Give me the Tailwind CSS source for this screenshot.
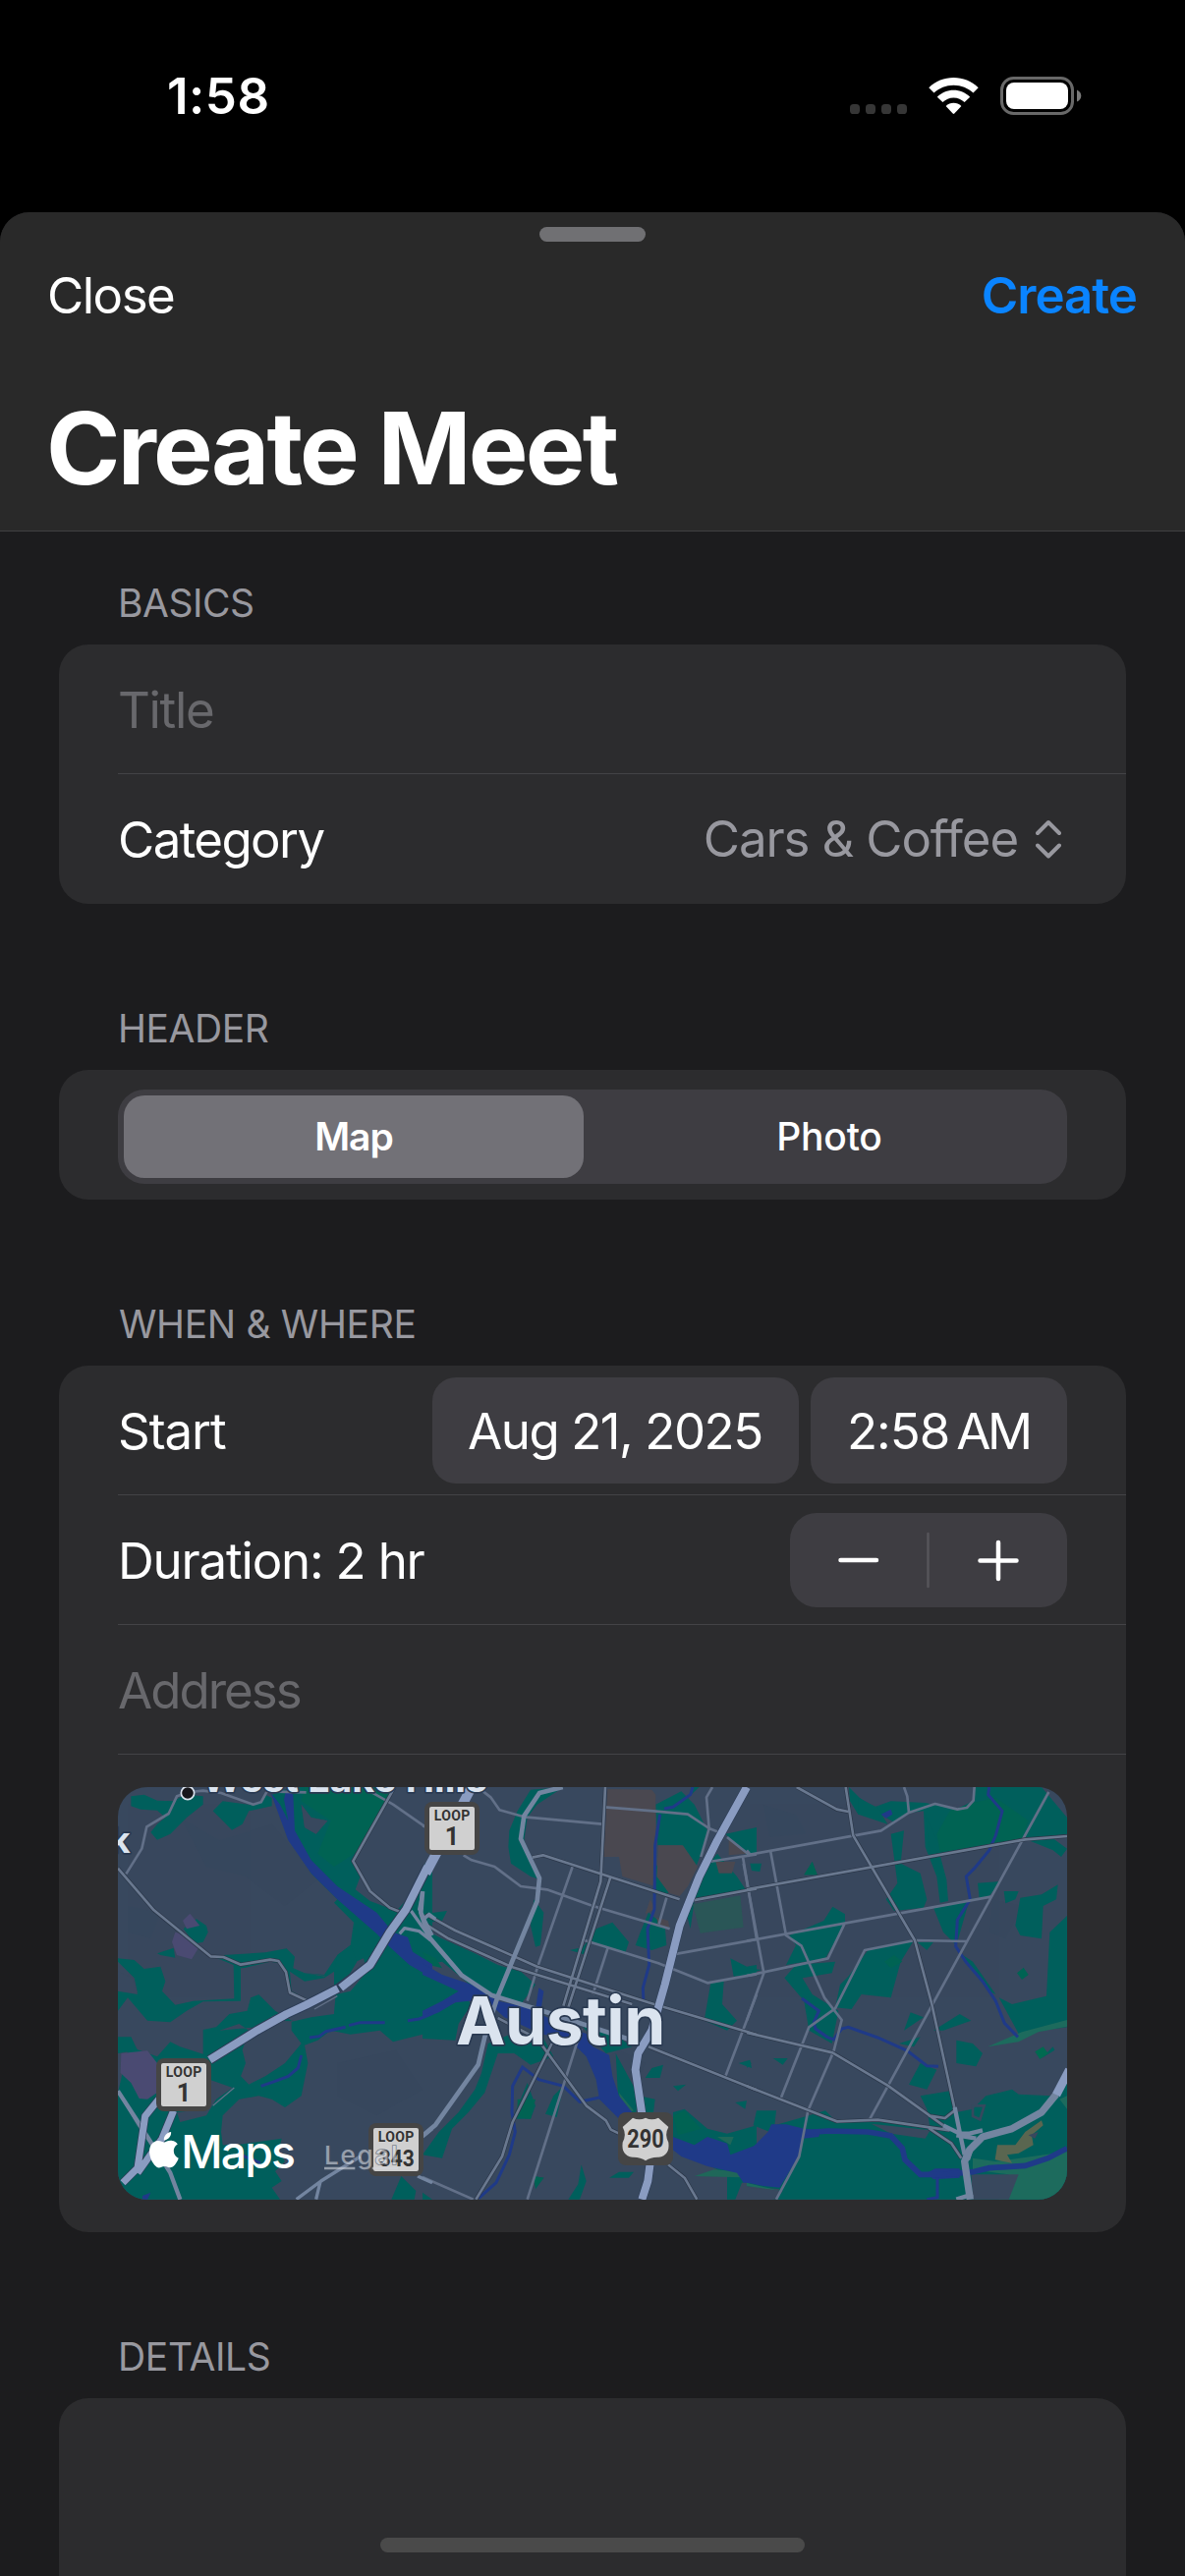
<!DOCTYPE html>
<html lang="en">
<head>
<meta charset="utf-8">
<title>Create Meet</title>
<script src="https://cdn.jsdelivr.net/npm/@tailwindcss/browser@4"></script>
</head>
<body class="bg-black">
<div class="relative flex h-[2622px] w-[1206px] flex-col overflow-hidden bg-black font-['Inter',sans-serif] text-[51px] leading-[60px] text-white">

  <!-- Status bar -->
  <div class="flex h-[216px] shrink-0 items-start justify-between pt-[68px] pr-[105px] pl-[170px]">
    <span class="font-semibold tracking-[0.5px]">1:58</span>
    <svg class="mt-[7px] h-[46px] w-[238px]" viewBox="863 75 238 46">
      <g fill="#363636">
        <rect x="865" y="106" width="10" height="10" rx="3.6"/><rect x="881" y="106" width="10" height="10" rx="3.6"/>
        <rect x="897" y="106" width="10" height="10" rx="3.6"/><rect x="913" y="106" width="10" height="10" rx="3.6"/>
      </g>
      <g fill="#fff">
        <path d="M945.3 89.2C952.4 82.6 961 79 970.5 79S988.600 82.600 995.700 89.200L990.500 94.600C985 89.500 978.300 86.700 970.500 86.700S956 89.500 950.500 94.600Z"/>
        <path d="M953.800 98.700C958.500 94.200 964.200 91.800 970.500 91.800S982.500 94.200 987.200 98.700L981.600 104.100C978.500 101.200 974.800 99.500 970.500 99.500S962.500 101.200 959.400 104.100Z"/>
        <path d="M962.600 108C964.900 105.800 967.500 104.700 970.500 104.700S976.100 105.800 978.400 108L971.300 115.600Q970.500 116.400 969.700 115.600Z"/>
      </g>
      <rect x="1019.500" y="79.500" width="72" height="36" rx="12" fill="none" stroke="#686868" stroke-width="3"/>
      <rect x="1024" y="84" width="63" height="27" rx="8" fill="#fff"/>
      <path d="M1096 91.500Q1100.300 93.500 1100.300 97.500T1096 103.500Z" fill="#7a7a7a"/>
    </svg>
  </div>

  <!-- Sheet -->
  <div class="flex flex-1 flex-col overflow-hidden rounded-t-[30px] bg-[#1c1c1e]">
    <header class="flex h-[325px] shrink-0 flex-col border-b border-[#414142] bg-[#292929] pt-[15px]">
      <div class="mx-auto h-[15px] w-[108px] rounded-full bg-[#707073]"></div>
      <div class="mt-[25px] flex items-center justify-between pr-[49px] pl-[48px]">
        <span class="tracking-[-1.5px]">Close</span>
        <span class="font-semibold tracking-[-1px] text-[#0a84ff]">Create</span>
      </div>
      <h1 class="mt-[65px] pl-[47px] text-[102px] leading-[120px] font-bold tracking-[-2.75px]">Create Meet</h1>
    </header>

    <main class="flex flex-col gap-[86px] px-[60px] pt-[32px]">
      <section>
        <h2 class="pl-[60px] text-[39px] leading-[82px] mb-px tracking-[-0.48px] text-[#98989f]">BASICS</h2>
        <div class="rounded-[30px] bg-[#2c2c2e] pl-[60px]">
          <div class="flex h-[132px] items-center border-b border-[#434346] pt-[2px] tracking-[-1.33px] text-[#68686c]">Title</div>
          <div class="flex h-[132px] items-center justify-between pr-[66px]">
            <span class="pt-[2px] tracking-[-1.6px]">Category</span>
            <div class="flex items-center gap-[18px] text-[#98989f]">
              <span class="tracking-[-1.15px]">Cars &amp; Coffee</span>
              <svg class="h-[40px] w-[26px]" viewBox="0 0 26 40" fill="none" stroke="currentColor" stroke-width="4" stroke-linecap="round" stroke-linejoin="round"><path d="M2 14 13 3 24 14M2 26.500 13 37.500 24 26.500"/></svg>
            </div>
          </div>
        </div>
      </section>

      <section>
        <h2 class="pl-[60px] text-[39px] leading-[82px] mb-px tracking-[-0.45px] text-[#98989f]">HEADER</h2>
        <div class="h-[132px] rounded-[30px] bg-[#2c2c2e] px-[60px] pt-[20px]">
          <div class="flex h-[96px] items-center rounded-[27px] bg-[#3e3d42] p-[6px] text-center text-[39px]">
            <div class="h-[84px] w-[468px] rounded-[21px] bg-[#727177] leading-[84px] font-semibold tracking-[-1px]">Map</div>
            <div class="flex-1 pl-[14px] leading-[84px] font-medium tracking-[-0.23px]">Photo</div>
          </div>
        </div>
      </section>

      <section>
        <h2 class="pl-[61px] text-[39px] leading-[82px] mb-px tracking-[-0.35px] text-[#98989f]">WHEN &amp; WHERE</h2>
        <div class="rounded-[30px] bg-[#2c2c2e] pl-[60px]">
          <div class="flex h-[132px] items-center border-b border-[#434346] pr-[60px]">
            <span class="pt-[2px] tracking-[-1.07px]">Start</span>
            <div class="ml-auto flex h-[108px] gap-[12px] leading-[110px]">
              <div class="w-[373px] rounded-[24px] bg-[#3e3d42] pl-[36px] tracking-[-1.45px]">Aug 21, 2025</div>
              <div class="flex w-[261px] gap-[7px] rounded-[24px] bg-[#3e3d42] pl-[37px]"><span class="tracking-[-1px]">2:58</span><span class="tracking-[-3.500px]">AM</span></div>
            </div>
          </div>
          <div class="flex h-[132px] items-center justify-between border-b border-[#434346] pr-[60px]">
            <span class="pt-[2px] tracking-[-1.2px]">Duration: 2 hr</span>
            <div class="flex h-[96px] w-[282px] items-center rounded-[27px] bg-[#3e3d42]">
              <svg class="h-[96px] w-[282px]" viewBox="0 0 282 96" fill="none" stroke-linecap="round"><path d="M140.500 21V75" stroke="#56555a" stroke-width="2.500"/><path d="M51.500 48H88M193.500 48.500H230.500M212 30V67" stroke="#fff" stroke-width="4.500"/></svg>
            </div>
          </div>
          <div class="flex h-[132px] items-center border-b border-[#434346] pt-[2px] tracking-[-2px] text-[#68686c]">Address</div>
          <div class="py-[33px]">
            <!-- Map: drawn at 3x in three abutting columns -->
            <svg class="block h-[420px] w-[966px] rounded-[30px]" viewBox="30 57 2898 1260">
              <rect x="30" y="57" width="2898" height="1260" fill="#38485e"/>
              <!-- terrain shading -->
              <g fill="#34455c" opacity=".3"><path d="M220,150 L340,220 500,170 560,240 640,340 540,420 420,330 300,300Z"/><path d="M60,420 L160,440 130,520 60,500Z"/><path d="M700,900 L880,860 960,980 820,1060 700,1000Z"/><path d="M1500,900 L1560,860 1640,900 1600,1000Z"/><path d="M2700,400 L2790,420 2740,520 2690,500Z"/><path d="M2000,110 L2100,140 2130,200 2020,210Z"/></g>
              <!-- parks -->
              <g fill="#005f5c">
                <path d="M70,85 L110,80 150,98 200,100 235,80 290,85 290,110 240,150 190,200 150,218 130,195 150,170 175,150 150,128 100,125 70,115Z"/>
                <path d="M320,130 L350,100 440,112 470,100 480,80 500,90 500,115 430,130 410,170 378,188 350,160Z"/>
                <path d="M500,80 L560,57 875,57 748,283 770,330 755,370 800,405 880,435 930,380 960,300 990,265 990,800 960,812 870,835 830,800 740,812 680,800 640,830 600,845 610,900 590,1000 540,1035 500,1010 460,1000 400,1010 350,1060 345,1110 350,1150 390,1150 460,1140 530,1130 520,1170 540,1200 510,1230 530,1260 500,1280 525,1316 60,1316 30,1250 30,990 60,860 70,820 80,855 150,880 190,835 220,850 290,872 290,798 330,790 370,750 425,740 435,700 460,690 510,740 560,770 690,745 695,690 740,680 790,620 780,580 690,620 680,635 600,625 660,630 700,570 740,540 750,470 690,410 700,400 620,320 560,220Z"/>
                <path d="M30,580 L80,585 110,612 160,605 175,650 165,680 205,722 260,710 385,703 383,600 315,572 480,562 545,550 570,575 565,610 600,625 660,635 690,620 700,570 740,540 760,590 700,690 570,690 480,610 405,610 405,710 290,712 240,740 190,775 120,770 60,700 30,740 30,680 90,685 80,640 30,590Z"/>
                <path d="M150,565 L200,548 205,578 160,570Z"/><path d="M230,490 L270,460 300,480 305,500 290,530 265,535Z"/><path d="M30,820 L70,820 90,860 30,870Z"/><path d="M865,1316 L895,1245 940,1290 935,1316Z"/>
              </g>
              <g fill="#38485e">
                <path d="M590,110 L620,150 670,160 635,200 600,180Z"/><path d="M340,800 L400,780 430,800 410,860 420,900 405,940 430,965 480,940 540,900 590,840 560,800 560,772 510,770 450,790Z"/>
                <path d="M405,612 L495,590 520,595 543,630 552,690 600,712 560,735 510,735 460,690 435,700 425,735 405,735Z"/>
                <path d="M555,620 L600,650 660,640 690,620 690,750 620,760 555,775 640,720 600,700 560,680Z"/><path d="M310,950 L380,975 330,1010 300,1060 220,1080 210,1050 300,1040Z"/><path d="M30,620 L75,640 90,690 30,680Z"/>
              </g>
              <path fill="#006353" d="M600,57 L870,57 760,255 690,300 640,260 680,160 590,100Z"/>
              <path fill="#38485e" d="M590,110 L620,150 670,160 635,200 600,180Z"/>
              <g fill="#4a4a72"><path d="M250,443 L280,480 240,490 228,465Z"/><path d="M205,500 L240,510 275,550 255,583 210,570 195,530Z"/><path d="M40,870 L120,862 150,900 150,990 120,1010 95,1008 70,960 38,930Z"/></g>
              <g transform="translate(960 0)" fill="#005f5c">
                <path d="M290,130 L330,65 430,57 350,110 320,150 310,220 340,290 360,340 330,330 270,290 262,240 265,190Z"/><path d="M0,445 L75,435 60,465 20,470Z"/><path d="M0,490 L60,520 160,565 230,600 300,620 345,660 300,720 230,700 180,690 120,640 60,590 0,600Z"/>
                <path d="M0,600 L130,670 110,690 0,745Z"/><path d="M0,765 L130,700 150,720 110,780 100,830 0,825Z"/>
                <path d="M200,840 L260,815 370,825 400,880 330,905 280,870 230,870 210,930 190,990 140,1050 90,1100 60,1190 0,1180 50,1110 110,1050 160,980 180,930Z"/>
                <path d="M340,400 L370,440 360,540 345,545 330,480Z"/><path d="M320,720 L370,740 350,780 300,760Z"/><path d="M530,490 L580,470 630,530 620,560 560,550 510,530Z"/><path d="M450,555 L490,545 510,520 500,570Z"/><path d="M690,440 L740,480 745,540 700,555 650,540 665,500Z"/>
                <path d="M712,110 L790,70 830,110 870,190 855,250 835,300 790,235 718,235Z"/><path d="M710,290 L740,330 752,380 712,385Z"/><path d="M820,57 L845,57 820,80Z"/><path d="M850,320 L900,260 960,330 990,375 830,405 818,490 800,420Z"/><path d="M925,200 L1020,180 1020,260 990,265Z"/>
                <path d="M940,580 L990,605 1020,600 1020,628 950,635Z"/><path d="M880,655 L920,650 915,720 960,770 930,800 860,770Z"/><path d="M700,915 L735,905 725,945 680,945Z"/><path d="M765,970 L805,965 780,985Z"/><path d="M965,900 L1000,890 1005,915Z"/><path d="M955,1020 L990,1015 985,1040Z"/>
                <path d="M765,1050 L800,1040 870,1100 930,1115 1020,1090 1020,1260 975,1265 955,1316 930,1316 930,1240 880,1215 765,1150Z"/><path d="M590,870 L660,1000 650,1060 600,1060Z"/><path d="M660,1000 L710,1010 705,1050 670,1050Z"/><path d="M400,1000 L430,970 410,1065 375,1055Z"/><path d="M320,960 L345,1030 330,1070 275,1070Z"/>
                <path d="M485,1210 L500,1260 480,1316 445,1316 475,1270Z"/><path d="M570,1250 L600,1232 645,1232 630,1250Z"/><path d="M340,1245 L370,1250 345,1285Z"/><path d="M0,1295 L30,1316 0,1316Z"/><path d="M490,790 L570,800 640,850 560,870Z"/>
              </g>
              <g transform="translate(960 0)"><path fill="#2a5657" d="M825,415 L970,388 980,485 848,503Z"/><path fill="#1f6759" d="M600,990 L645,1045 610,1060Z M830,1245 L890,1225 1020,1235 1020,1250Z M900,1125 L950,1125 940,1150Z"/><path fill="#006353" d="M765,1060 L800,1045 850,1100 780,1120Z M290,1010 L345,1010 330,1070 290,1065Z M0,560 L40,580 60,610 20,600Z M340,1245 L370,1250 345,1280Z"/>
                <g fill="#4a4850"><path d="M565,63 L700,65 712,80 710,360 610,330 600,270 553,270Z"/><path d="M720,235 L795,235 840,300 810,360 785,390 752,380 715,330Z"/><path d="M695,400 L710,430 680,445Z M715,455 L750,465 755,490 720,480Z M935,215 L990,260 935,265Z M895,285 L955,285 945,320 905,320Z"/></g>
              </g>
              <g transform="translate(1950 0)" fill="#005f5c">
                <path d="M312,57 L345,90 390,118 440,100 545,105 640,125 690,100 695,57 900,57 978,150 978,200 850,215 750,230 590,265 610,340 615,405 590,410 580,330 545,240 540,130 500,135 410,190 450,165 400,135 340,140 315,100Z"/>
                <path d="M440,200 L480,190 470,290 530,320 550,400 540,425 450,435 425,400 460,350Z"/><path d="M545,140 L600,260 560,265Z"/><path d="M340,90 L400,120 430,170 340,140Z"/>
                <path d="M10,290 L45,290 40,315 15,312Z"/><path d="M175,325 L200,285 215,325Z"/><path d="M235,465 L262,422 300,445 300,475 240,580 120,600 150,540 130,510Z"/><path d="M115,640 L150,600 270,590 260,625 170,640 200,690 280,740 260,840 190,800 175,710Z"/>
                <path d="M285,660 L310,635 370,555 510,525 470,590 440,700 350,690 320,735 270,730Z"/><path d="M520,530 L570,530 550,555Z"/><path d="M570,425 L740,390 775,345 705,350 710,395 680,400 640,540 600,500Z"/>
                <path d="M785,375 L830,375 820,400 790,412Z"/><path d="M820,480 L835,395 900,385 950,355 945,400 905,420 900,520 835,510Z"/><path d="M925,500 L978,450 978,790 830,810 770,700 810,720 915,695Z"/><path d="M850,215 L930,210 978,245 960,270 935,250Z"/><path d="M645,560 L690,590 760,690 740,680Z"/>
                <path d="M640,830 L690,840 720,870 700,910 640,900Z"/><path d="M500,745 L540,760 480,800Z"/><path d="M570,800 L650,750 685,770 600,800Z"/><path d="M465,840 L530,820 510,850Z"/><path d="M530,900 L580,920 550,980 495,965Z"/><path d="M80,885 L125,885 110,905Z M0,895 L15,900 0,915Z M0,610 L45,615 0,630Z"/>
                <path d="M530,1000 L620,985 640,1050 690,1040 730,1000 810,980 830,995 930,1000 978,930 978,1316 80,1316 100,1285 0,1275 0,1185 70,1110 20,1090 30,1045 90,1045 85,1090 190,1060 240,1045 270,1075 430,1080 560,1100 550,1040Z"/><path d="M935,850 L940,860 900,885Z"/>
              </g>
              <g transform="translate(1950 0)">
                <g fill="#006353"><path d="M620,130 L690,105 760,90 860,160 840,215 590,255 580,200Z"/><path d="M175,325 L200,285 215,325Z M420,590 L450,570 475,590 440,610Z M825,625 L845,608 860,630 840,645Z"/></g>
                <path fill="#006a50" d="M880,865 L905,850 920,870 895,888Z"/>
                <path fill="#1d6b5d" d="M735,850 L840,805 978,768 978,788 890,805 830,835Z M690,1190 L760,1200 978,1170 978,1260 940,1316 770,1316 800,1240 690,1225Z M955,1010 L978,1000 978,1040Z M0,1265 L100,1290 0,1275Z"/>
                <path fill="#5a6650" d="M765,1150 L820,1150 850,1110 900,1075 905,1090 870,1120 875,1150 830,1175 795,1180 810,1205 758,1195Z"/>
                <g fill="#38485e"><path d="M685,1240 L830,1240 800,1316 690,1316Z"/><path d="M380,1085 L560,1105 545,1130 440,1115Z"/><path d="M860,1120 L890,1110 880,1130Z"/><path d="M0,1280 L110,1290 90,1316 0,1316Z"/></g>
                <path d="M690,1030H725L712,1072 690,1062Z" fill="none" stroke="#35495e" stroke-width="8"/>
              </g>
              <!-- water -->
              <g fill="#1f3a88">
                <path d="M497,75 L525,110 550,160 537,95 545,60 565,80 570,190 620,280 700,360 820,440 870,500 915,515 930,560 990,598 990,640 920,600 860,545 820,505 700,400 620,320 550,220Z"/>
                <path transform="translate(960 0)" d="M0,595 L60,630 150,660 230,710 345,735 355,670 370,680 360,750 440,790 500,810 520,850 570,875 580,940 600,1000 640,1050 700,1080 600,1070 540,1010 530,950 500,880 450,830 360,810 250,760 190,705 100,715 50,745 0,765 0,740 60,710 110,680 0,630Z"/>
                <path transform="translate(960 0)" d="M765,1125 L830,1150 870,1125 930,1145 940,1180 1020,1150 1020,1265 980,1265 960,1235 870,1215 790,1185 765,1165Z"/>
                <path transform="translate(1950 0)" d="M0,1175 L65,1110 75,1087 120,1087 175,1100 225,1105 220,1125 172,1130 155,1190 100,1280 50,1275 0,1265Z"/>
                <path transform="translate(1950 0)" d="M410,140 L440,125 445,140 425,152Z M550,1235 L575,1222 650,1222 650,1250 570,1255Z"/>
                <path d="M105,1305 L130,1295 120,1316 105,1316Z"/>
              </g>
              <g fill="none" stroke="#1f3a88" stroke-width="9">
                <path d="M615,822 L645,818 665,803 725,790M735,785 L770,776 845,776M915,770 L950,765 990,748M467,970 L510,955 550,940 580,915 590,876M405,1180 L465,1205"/>
                <path transform="translate(960 0)" d="M825,57 L818,80 765,118 738,123M725,140 L710,235 708,430 687,490 692,600 673,670 675,715"/>
                <path transform="translate(960 0)" d="M540,1005 L480,1018 430,970 355,950 305,912 275,970 273,1050 283,1110 265,1180 225,1265 172,1312"/>
                <path transform="translate(1950 0)" d="M740,57 L737,80 780,130 760,205 740,250 695,305 670,330 682,400 643,463 638,543 670,592 720,650 760,710 787,778 828,820"/>
                <path transform="translate(1950 0)" d="M168,702 L220,740 205,775 210,795 245,820 265,828 290,795 310,790 400,822 490,862 550,908 585,910M582,1250 V1310 L550,1316"/>
                <path transform="translate(1950 0)" stroke-width="17" d="M180,1112 L250,1107 370,1110 440,1122 475,1160 483,1195 530,1240 600,1240 690,1232 740,1220 850,1213 920,1190 978,1160"/>
              </g>
              <!-- roads -->
              <g fill="none" stroke="#627088" stroke-width="8" stroke-linejoin="round">
                <path d="M55,322 L103,245 118,178 185,138 210,85 250,72 290,68 345,75 443,110 467,103 485,70 605,73M800,70 L870,110 968,178M30,985 L90,1085 190,1235 220,1316" />
                <path d="M500,760 L540,742M630,735 L700,695M320,1030 L385,975" stroke-width="4"/>
                <g transform="translate(960 0)">
                  <path d="M185,70 L208,88 235,127 310,148 548,170M125,265 L150,280 220,300 300,360 380,370 520,420 755,490M458,300 L350,610 320,710M495,525 L720,595 870,655 1020,628M565,550 L520,690M745,395 L722,475M555,118 L705,130 810,140 875,183 905,195M885,57 L867,88 875,183 850,270M875,285 L1020,262M930,210 L995,262M978,270 L1020,520M765,568 L1020,522M1020,690 L925,940M485,795 L320,1316M0,1248 L155,1316M0,175 L20,180"/>
                </g>
                <g transform="translate(1950 0)">
                  <path d="M0,265 L410,190 495,135 575,108 643,125 672,120 692,98 695,57M480,57 L490,85 495,135M73,255 L120,510 167,542 237,700 290,768 265,865 187,1045 160,1185 90,1316M0,250 L10,262M-10,290 L52,625 0,770M0,527 L745,392M0,633 L248,580 298,475M922,72 L375,1072M673,528 L513,525 360,555 270,733 190,790 105,1005"/>
                </g>
              </g>
              <g fill="none" stroke="#2b3749" stroke-width="12" stroke-linejoin="round">
                <path d="M30,305 L140,433 313,574 352,576 405,599 495,584 520,588 543,622 555,685 605,708M875,57 L748,283 800,375 860,425 890,437"/>
                <path transform="translate(960 0)" d="M558,57 L544,345 430,725M573,335 L445,730M335,272 L368,265 785,400M825,403 L1020,367M0,460 L15,448 100,495 350,605 690,715 1020,813M0,470 L80,520 270,605 640,720M690,850 L1020,982M230,762 L350,825 500,1030 560,1075 575,1103 600,1115M395,840 L275,1080 243,1185 163,1316M750,1210 L800,1250 838,1316"/>
                <path transform="translate(1950 0)" d="M152,57 L275,125 310,132M302,57 L325,205 513,525 565,720 635,1040M0,370 L850,217 978,207M0,807 L262,868 430,968 600,1090M0,970 L275,1078 400,1073 620,1105M555,1060 L605,1068 640,1040M555,1098 L625,1145 655,1190"/>
              </g>
              <g fill="none" stroke="#69788f" stroke-width="8" stroke-linejoin="round">
                <path d="M30,305 L140,433 313,574 352,576 405,599 495,584 520,588 543,622 555,685 605,708M875,57 L748,283 800,375 860,425 890,437"/>
                <path transform="translate(960 0)" d="M558,57 L544,345 430,725M573,335 L445,730M335,272 L368,265 785,400M825,403 L1020,367M0,460 L15,448 100,495 350,605 690,715 1020,813M0,470 L80,520 270,605 640,720M690,850 L1020,982M230,762 L350,825 500,1030 560,1075 575,1103 600,1115M395,840 L275,1080 243,1185 163,1316M750,1210 L800,1250 838,1316"/>
                <path transform="translate(1950 0)" d="M152,57 L275,125 310,132M302,57 L325,205 513,525 565,720 635,1040M0,370 L850,217 978,207M0,807 L262,868 430,968 600,1090M0,970 L275,1078 400,1073 620,1105M555,1060 L605,1068 640,1040M555,1098 L625,1145 655,1190"/>
              </g>
              <g fill="none" stroke="#7385a0" stroke-width="14" stroke-linejoin="round">
                <path d="M30,985 L95,1085 190,1235 220,1316" stroke-width="13"/>
                <path d="M575,1316 L650,1260 770,1185M635,1316 L648,1262M960,1125 L990,1100M945,1245 L990,1265" stroke-width="10"/>
                <path d="M890,505 L905,488 950,497 985,525M925,435 L985,520M960,380 L950,430 990,510M965,460 L980,445 1000,460" stroke-width="10"/>
                <path transform="translate(960 0)" d="M428,57 L357,75 310,145 300,215 357,335 350,405 230,695 190,820 170,905 40,1088 0,1122"/>
                <path transform="translate(960 0)" d="M0,375 L-5,440 20,515 120,632 210,692 380,745 640,830"/>
                <g transform="translate(1950 0)"><path stroke-width="22" d="M682,1316 L665,1200 680,1165 720,1125 810,1100 900,1050 945,995"/><path stroke-width="13" d="M635,1035 L650,1110 665,1180M600,1090 L650,1115 680,1115 720,1105M640,1120 L700,1130M675,1195 L690,1150 730,1120M640,1316 L690,1300"/></g>
              </g>
              <g fill="none" stroke-linejoin="round">
                <g stroke="#2c3c56" stroke-width="30"><path d="M975,300 L910,430 860,500 800,600 705,670M705,670 L605,722 545,750 455,800 310,890"/><path d="M1110,57 L970,320"/><path d="M1950,57 L1860,220 1805,330 1745,480 1700,660 1660,800 1618,870 1610,920 1630,1055M1655,1205 L1648,1260 1630,1316" stroke-width="27"/><path d="M155,1010 L113,1062 90,1220 45,1265M200,1045 L165,1130 90,1235" stroke-width="25"/></g>
                <g stroke="#8a9cc1" stroke-width="24"><path d="M975,300 L910,430 860,500 800,600 710,670M702,672 L605,722 545,750 455,800 310,890"/><path d="M1110,57 L970,320" stroke-width="30"/><path d="M1950,57 L1860,220 1805,330 1745,480 1700,660 1660,800 1618,870 1610,920 1630,1055M1655,1205 L1648,1260 1630,1316"/><path d="M155,1010 L113,1062 90,1220 45,1265M200,1045 L165,1130 90,1235" stroke-width="21"/><path d="M2895,997 L2935,920" stroke-width="26"/></g>
              </g>
              <!-- labels -->
              <g font-family="Inter, sans-serif" fill="#dbe4ef">
                <g stroke="#2a3a52" stroke-width="10" stroke-linejoin="round" paint-order="stroke">
                  <text x="286" y="71" font-size="118" font-weight="700" textLength="872">West Lake Hills</text>
                  <text x="68" y="259" font-size="108" font-weight="700" text-anchor="end">k</text>
                  <text x="1062" y="843" font-size="203" font-weight="700" textLength="640">Austin</text>
                </g>
                <circle cx="243" cy="75" r="20" fill="#17171c" stroke="#dbe4ef" stroke-width="5"/>
              </g>
              <!-- route shields -->
              <g font-family="Roboto, sans-serif" font-weight="700" fill="#333" text-anchor="middle">
                <g id="loop1"><rect x="147" y="885" width="168" height="162" rx="24" fill="#454545"/><rect x="162" y="900" width="138" height="132" rx="6" fill="#d0d0d0"/><text x="231" y="942" font-size="42" textLength="110">LOOP</text><text x="231" y="1017" font-size="76">1</text></g>
                <use href="#loop1" x="819" y="-783"/>
                <g><rect x="795" y="1083" width="168" height="162" rx="24" fill="#454545"/><rect x="810" y="1098" width="138" height="132" rx="6" fill="#d0d0d0"/><text x="879" y="1140" font-size="42" textLength="110">LOOP</text><text x="881" y="1214" font-size="72" textLength="108" lengthAdjust="spacingAndGlyphs">343</text></g>
                <rect x="1557" y="1050" width="168" height="162" rx="24" fill="#454545"/>
                <path d="M1602,1067 Q1622,1076 1641,1067 Q1660,1076 1680,1067 L1711,1095 Q1698,1118 1711,1142 Q1716,1182 1681,1187 Q1657,1186 1641,1198 Q1625,1186 1601,1187 Q1566,1182 1571,1142 Q1584,1118 1571,1095Z" fill="#d0d0d0"/>
                <text x="1641" y="1158" font-size="80" textLength="112" lengthAdjust="spacingAndGlyphs">290</text>
              </g>
              <!-- attribution -->
              <g font-family="Inter, sans-serif">
                <path fill="#fff" transform="translate(116 1110) scale(4.55)" d="M12.152 6.896c-.948 0-2.415-1.078-3.960-1.040-2.040.027-3.910 1.183-4.961 3.014-2.117 3.675-.546 9.103 1.519 12.090 1.013 1.454 2.208 3.090 3.792 3.039 1.520-.065 2.090-.987 3.935-.987 1.831 0 2.350.987 3.960.948 1.637-.026 2.676-1.480 3.676-2.948 1.156-1.688 1.636-3.325 1.662-3.415-.039-.013-3.182-1.221-3.220-4.857-.026-3.040 2.480-4.494 2.597-4.559-1.429-2.090-3.623-2.324-4.390-2.376-2-.156-3.675 1.090-4.610 1.090zM15.530 3.830c.843-1.012 1.400-2.427 1.245-3.830-1.207.052-2.662.805-3.532 1.818-.780.896-1.454 2.338-1.273 3.714 1.338.104 2.715-.688 3.559-1.701"/>
                <text x="223" y="1221" font-size="139" font-weight="500" fill="#fff" textLength="350">Maps</text>
                <g opacity=".6" fill="#d5d9e0" stroke="#46505f" stroke-width="5" paint-order="stroke"><text x="660" y="1208" font-size="78" font-weight="500" textLength="224">Legal</text><path stroke="none" d="M660,1217H754V1225H660ZM806,1217H885V1225H806Z"/></g>
              </g>
            </svg>
          </div>
        </div>
      </section>

      <section>
        <h2 class="pl-[60px] text-[39px] leading-[82px] mb-px tracking-[-0.35px] text-[#98989f]">DETAILS</h2>
        <div class="h-[240px] rounded-t-[30px] bg-[#2c2c2e]"></div>
      </section>
    </main>
  </div>

  <!-- Home indicator -->
  <div class="absolute bottom-[24px] left-[387px] h-[15px] w-[432px] rounded-full bg-[#4a4a4a]"></div>
</div>
</body>
</html>
